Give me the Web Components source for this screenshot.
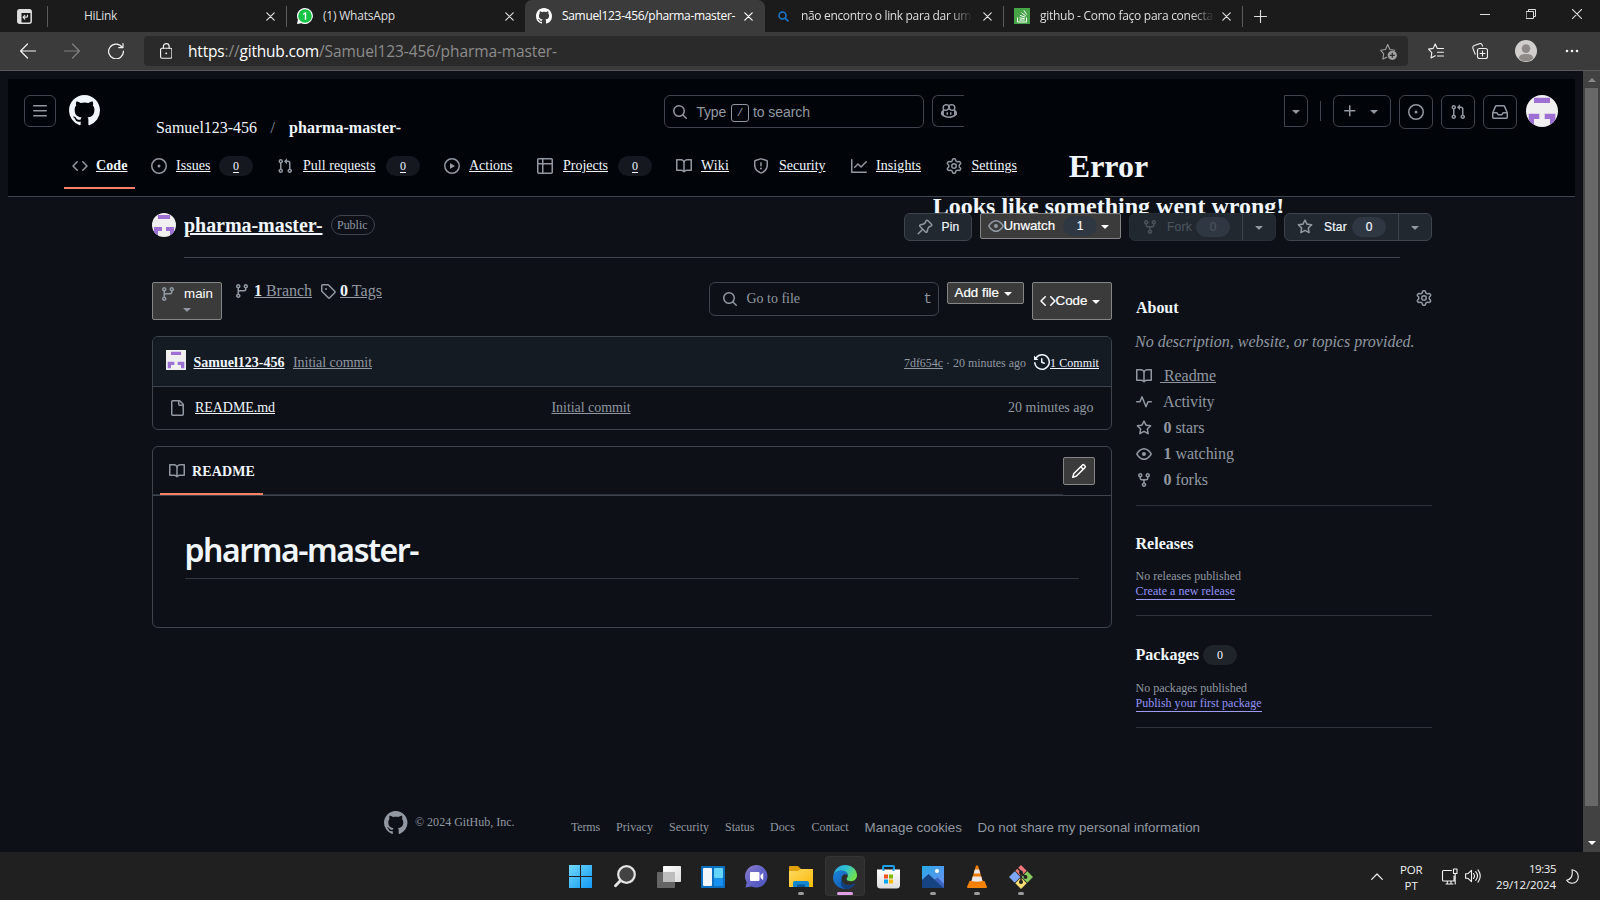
<!DOCTYPE html>
<html lang="pt">
<head>
<meta charset="utf-8">
<title>Samuel123-456/pharma-master-</title>
<style>
html,body{margin:0;padding:0;width:1600px;height:900px;overflow:hidden;background:#0d1117}
body{display:flex;flex-direction:column;font-family:"Liberation Serif",serif;color:#f0f6fc}
.view{display:flex;height:781px}
.page{position:relative;width:1583px;height:781px;background:#0d1117;overflow:hidden}
</style>
</head>
<body>
<browser-tabs></browser-tabs>
<browser-toolbar></browser-toolbar>
<div class="view">
  <main class="page">
    <gh-header></gh-header>
    <gh-error><span slot="title">Error</span><span slot="detail">Looks like something went wrong!</span></gh-error>
    <repo-title></repo-title>
    <repo-body></repo-body>
    <gh-footer></gh-footer>
  </main>
  <scroll-bar></scroll-bar>
</div>
<task-bar></task-bar>
<script>
const P = {
code:'m11.28 3.22 4.25 4.25a.75.75 0 0 1 0 1.06l-4.25 4.25a.749.749 0 0 1-1.275-.326.749.749 0 0 1 .215-.734L13.94 8l-3.72-3.72a.749.749 0 0 1 .326-1.275.749.749 0 0 1 .734.215Zm-6.56 0a.751.751 0 0 1 1.042.018.751.751 0 0 1 .018 1.042L2.06 8l3.72 3.72a.749.749 0 0 1-.326 1.275.749.749 0 0 1-.734-.215L.47 8.53a.75.75 0 0 1 0-1.06Z',
issue:'M8 9.5a1.5 1.5 0 1 0 0-3 1.5 1.5 0 0 0 0 3ZM8 0a8 8 0 1 1 0 16A8 8 0 0 1 8 0ZM1.5 8a6.5 6.5 0 1 0 13 0 6.5 6.5 0 0 0-13 0Z',
pr:'M1.5 3.25a2.25 2.25 0 1 1 3 2.122v5.256a2.251 2.251 0 1 1-1.5 0V5.372A2.25 2.25 0 0 1 1.5 3.25Zm5.677-.177L9.573.677A.25.25 0 0 1 10 .854V2.5h1A2.5 2.5 0 0 1 13.5 5v5.628a2.251 2.251 0 1 1-1.5 0V5a1 1 0 0 0-1-1h-1v1.646a.25.25 0 0 1-.427.177L7.177 3.427a.25.25 0 0 1 0-.354ZM3.75 2.5a.75.75 0 1 0 0 1.5.75.75 0 0 0 0-1.5Zm0 9.5a.75.75 0 1 0 0 1.5.75.75 0 0 0 0-1.5Zm8.25.75a.75.75 0 1 0 1.5 0 .75.75 0 0 0-1.5 0Z',
play:'M8 0a8 8 0 1 1 0 16A8 8 0 0 1 8 0ZM1.5 8a6.5 6.5 0 1 0 13 0 6.5 6.5 0 0 0-13 0Zm4.879-2.773 4.264 2.559a.25.25 0 0 1 0 .428l-4.264 2.559A.25.25 0 0 1 6 10.559V5.442a.25.25 0 0 1 .379-.215Z',
table:'M0 1.75C0 .784.784 0 1.75 0h12.5C15.216 0 16 .784 16 1.75v12.5A1.75 1.75 0 0 1 14.25 16H1.75A1.75 1.75 0 0 1 0 14.25ZM6.5 6.5v8h7.75a.25.25 0 0 0 .25-.25V6.5Zm8-1.5V1.75a.25.25 0 0 0-.25-.25H6.5V5Zm-13 1.5v7.75c0 .138.112.25.25.25H5v-8ZM5 5V1.5H1.75a.25.25 0 0 0-.25.25V5Z',
book:'M0 1.75A.75.75 0 0 1 .75 1h4.253c1.227 0 2.317.59 3 1.501A3.743 3.743 0 0 1 11.006 1h4.245a.75.75 0 0 1 .75.75v10.5a.75.75 0 0 1-.75.75h-4.507a2.25 2.25 0 0 0-1.591.659l-.622.621a.75.75 0 0 1-1.06 0l-.622-.621A2.25 2.25 0 0 0 5.258 13H.75a.75.75 0 0 1-.75-.75Zm7.251 10.324.004-5.073-.002-2.253A2.25 2.25 0 0 0 5.003 2.5H1.5v9h3.757a3.75 3.75 0 0 1 1.994.574ZM8.755 4.75l-.004 7.322a3.752 3.752 0 0 1 1.992-.572H14.5v-9h-3.495a2.25 2.25 0 0 0-2.25 2.25Z',
shield:'M7.467.133a1.748 1.748 0 0 1 1.066 0l5.25 1.68A1.75 1.75 0 0 1 15 3.48V7c0 1.566-.32 3.182-1.303 4.682-.983 1.498-2.585 2.813-5.032 3.855a1.697 1.697 0 0 1-1.33 0c-2.447-1.042-4.049-2.357-5.032-3.855C1.32 10.182 1 8.566 1 7V3.48a1.75 1.75 0 0 1 1.217-1.667Zm.61 1.429a.25.25 0 0 0-.153 0l-5.25 1.68a.25.25 0 0 0-.174.238V7c0 1.358.275 2.666 1.057 3.86.784 1.194 2.121 2.34 4.366 3.297a.196.196 0 0 0 .154 0c2.245-.956 3.582-2.104 4.366-3.298C13.225 9.666 13.5 8.36 13.5 7V3.48a.251.251 0 0 0-.174-.237l-5.25-1.68ZM8.75 4.75v3a.75.75 0 0 1-1.5 0v-3a.75.75 0 0 1 1.5 0ZM9 10.5a1 1 0 1 1-2 0 1 1 0 0 1 2 0Z',
graph:'M1.5 1.75V13.5h13.75a.75.75 0 0 1 0 1.5H.75a.75.75 0 0 1-.75-.75V1.75a.75.75 0 0 1 1.5 0Zm14.28 2.53-5.25 5.25a.75.75 0 0 1-1.06 0L7 7.06 4.28 9.78a.751.751 0 0 1-1.042-.018.751.751 0 0 1-.018-1.042l3.25-3.25a.75.75 0 0 1 1.06 0L10 7.94l4.72-4.72a.751.751 0 0 1 1.042.018.751.751 0 0 1 .018 1.042Z',
gear:'M8 0a8.2 8.2 0 0 1 .701.031C9.444.095 9.99.645 10.16 1.29l.288 1.107c.018.066.079.158.212.224.231.114.454.243.668.386.123.082.233.09.299.071l1.103-.303c.644-.176 1.392.021 1.82.63.27.385.506.792.704 1.218.315.675.111 1.422-.364 1.891l-.814.806c-.049.048-.098.147-.088.294.016.257.016.515 0 .772-.01.147.038.246.088.294l.814.806c.475.469.679 1.216.364 1.891a7.977 7.977 0 0 1-.704 1.217c-.428.61-1.176.807-1.82.63l-1.102-.302c-.067-.019-.177-.011-.3.071a5.909 5.909 0 0 1-.668.386c-.133.066-.194.158-.211.224l-.29 1.106c-.168.646-.715 1.196-1.458 1.26a8.006 8.006 0 0 1-1.402 0c-.743-.064-1.289-.614-1.458-1.26l-.289-1.106c-.018-.066-.079-.158-.212-.224a5.738 5.738 0 0 1-.668-.386c-.123-.082-.233-.09-.299-.071l-1.103.303c-.644.176-1.392-.021-1.82-.63a8.12 8.12 0 0 1-.704-1.218c-.315-.675-.111-1.422.363-1.891l.815-.806c.05-.048.098-.147.088-.294a6.214 6.214 0 0 1 0-.772c.01-.147-.038-.246-.088-.294l-.815-.806C.635 6.045.431 5.298.746 4.623a7.92 7.92 0 0 1 .704-1.217c.428-.61 1.176-.807 1.82-.63l1.102.302c.067.019.177.011.3-.071.214-.143.437-.272.668-.386.133-.066.194-.158.211-.224l.29-1.106C6.009.645 6.556.095 7.299.03 7.53.01 7.764 0 8 0Zm-.571 1.525c-.036.003-.108.036-.137.146l-.289 1.105c-.147.561-.549.967-.998 1.189-.173.086-.34.183-.5.29-.417.278-.97.423-1.529.27l-1.103-.303c-.109-.03-.175.016-.195.045-.22.312-.412.644-.573.99-.014.031-.021.11.059.19l.815.806c.411.406.562.957.53 1.456a4.709 4.709 0 0 0 0 .582c.032.499-.119 1.05-.53 1.456l-.815.806c-.081.08-.073.159-.059.19.162.346.353.677.573.989.02.03.085.076.195.046l1.102-.303c.56-.153 1.113-.008 1.53.27.161.107.328.204.501.29.447.222.85.629.997 1.189l.289 1.105c.029.109.101.143.137.146a6.6 6.6 0 0 0 1.142 0c.036-.003.108-.036.137-.146l.289-1.105c.147-.561.549-.967.998-1.189.173-.086.34-.183.5-.29.417-.278.97-.423 1.529-.27l1.103.303c.109.029.175-.016.195-.045.22-.313.411-.644.573-.99.014-.031.021-.11-.059-.19l-.815-.806c-.411-.406-.562-.957-.53-1.456a4.709 4.709 0 0 0 0-.582c-.032-.499.119-1.05.53-1.456l.815-.806c.081-.08.073-.159.059-.19a6.464 6.464 0 0 0-.573-.989c-.02-.03-.085-.076-.195-.046l-1.102.303c-.56.153-1.113.008-1.53-.27a4.44 4.44 0 0 0-.501-.29c-.447-.222-.85-.629-.997-1.189l-.289-1.105c-.029-.11-.101-.143-.137-.146a6.6 6.6 0 0 0-1.142 0ZM11 8a3 3 0 1 1-6 0 3 3 0 0 1 6 0ZM9.5 8a1.5 1.5 0 1 0-3.001.001A1.5 1.5 0 0 0 9.5 8Z',
search:'M10.68 11.74a6 6 0 0 1-7.922-8.982 6 6 0 0 1 8.982 7.922l3.04 3.04a.749.749 0 0 1-.326 1.275.749.749 0 0 1-.734-.215ZM11.5 7a4.499 4.499 0 1 0-8.997 0A4.499 4.499 0 0 0 11.5 7Z',
bars:'M1 2.75A.75.75 0 0 1 1.75 2h12.5a.75.75 0 0 1 0 1.5H1.75A.75.75 0 0 1 1 2.75Zm0 5A.75.75 0 0 1 1.75 7h12.5a.75.75 0 0 1 0 1.5H1.75A.75.75 0 0 1 1 7.75ZM1.75 12h12.5a.75.75 0 0 1 0 1.5H1.75a.75.75 0 0 1 0-1.5Z',
github:'M8 0c4.42 0 8 3.58 8 8a8.013 8.013 0 0 1-5.45 7.59c-.4.08-.55-.17-.55-.38 0-.27.01-1.13.01-2.2 0-.75-.25-1.23-.54-1.48 1.78-.2 3.65-.88 3.65-3.95 0-.88-.31-1.59-.82-2.15.08-.2.36-1.02-.08-2.12 0 0-.67-.22-2.2.82-.64-.18-1.32-.27-2-.27-.68 0-1.36.09-2 .27-1.53-1.03-2.2-.82-2.2-.82-.44 1.1-.16 1.92-.08 2.12-.51.56-.82 1.28-.82 2.15 0 3.06 1.86 3.75 3.64 3.95-.23.2-.44.55-.51 1.07-.46.21-1.61.55-2.33-.66-.15-.24-.6-.83-1.23-.82-.67.01-.27.38.01.53.34.19.73.9.82 1.13.16.45.68 1.31 2.69.94 0 .67.01 1.3.01 1.49 0 .21-.15.45-.55.38A7.995 7.995 0 0 1 0 8c0-4.42 3.58-8 8-8Z',
down:'m4.427 7.427 3.396 3.396a.25.25 0 0 0 .354 0l3.396-3.396A.25.25 0 0 0 11.396 7H4.604a.25.25 0 0 0-.177.427Z',
plus:'M7.75 2a.75.75 0 0 1 .75.75V7h4.25a.75.75 0 0 1 0 1.5H8.5v4.25a.75.75 0 0 1-1.5 0V8.5H2.75a.75.75 0 0 1 0-1.5H7V2.75A.75.75 0 0 1 7.75 2Z',
inbox:'M2.8 2.06A1.75 1.75 0 0 1 4.41 1h7.18c.7 0 1.333.417 1.61 1.06l2.74 6.395c.04.093.06.194.06.295v4.5A1.75 1.75 0 0 1 14.25 15H1.75A1.75 1.75 0 0 1 0 13.25v-4.5c0-.101.02-.202.06-.295Zm1.61.44a.25.25 0 0 0-.23.152L1.887 8H4.75a.75.75 0 0 1 .6.3L6.625 10h2.75l1.275-1.7a.75.75 0 0 1 .6-.3h2.863L11.82 2.652a.25.25 0 0 0-.23-.152Zm10.09 7h-2.875l-1.275 1.7a.75.75 0 0 1-.6.3h-3.5a.75.75 0 0 1-.6-.3L4.375 9.5H1.5v3.75c0 .138.112.25.25.25h12.5a.25.25 0 0 0 .25-.25Z',
copilot:'M7.998 15.035c-4.562 0-7.873-2.914-7.998-3.749V9.338c.085-.628.677-1.686 1.588-2.065.013-.07.024-.143.036-.218.029-.183.06-.384.126-.612-.201-.508-.254-1.084-.254-1.656 0-.87.128-1.769.693-2.484.579-.733 1.494-1.124 2.724-1.261 1.206-.134 2.262.034 2.944.765.05.053.096.108.139.165.044-.057.094-.112.143-.165.682-.731 1.738-.899 2.944-.765 1.23.137 2.145.528 2.724 1.261.566.715.693 1.614.693 2.484 0 .572-.053 1.148-.254 1.656.066.228.098.429.126.612.012.076.024.148.037.218.924.385 1.522 1.471 1.591 2.095v1.872c0 .766-3.351 3.795-8.002 3.795Zm0-1.485c2.28 0 4.584-1.11 5.002-1.433V7.862l-.023-.116c-.49.21-1.075.291-1.727.291-1.146 0-2.059-.327-2.71-.991A3.222 3.222 0 0 1 8 6.303a3.24 3.24 0 0 1-.544.743c-.65.664-1.563.991-2.71.991-.652 0-1.236-.081-1.727-.291l-.023.116v4.255c.419.323 2.722 1.433 5.002 1.433ZM6.762 2.83c-.193-.206-.637-.413-1.682-.297-1.019.113-1.479.404-1.713.7-.247.312-.369.789-.369 1.554 0 .793.129 1.171.308 1.371.162.181.519.379 1.442.379.853 0 1.339-.235 1.638-.54.315-.322.527-.827.617-1.553.117-.935-.037-1.395-.241-1.614Zm4.155-.297c-1.044-.116-1.488.091-1.681.297-.204.219-.359.679-.242 1.614.091.726.303 1.231.618 1.553.299.305.784.54 1.638.54.922 0 1.28-.198 1.442-.379.179-.2.308-.578.308-1.371 0-.765-.123-1.242-.37-1.554-.233-.296-.693-.587-1.713-.7ZM6.25 9.037a.75.75 0 0 1 .75.75v1.501a.75.75 0 0 1-1.5 0V9.787a.75.75 0 0 1 .75-.75Zm4.25.75v1.501a.75.75 0 0 1-1.5 0V9.787a.75.75 0 0 1 1.5 0Z',
pin:'m11.294.984 3.722 3.722a1.75 1.75 0 0 1-.504 2.826l-1.327.613a3.089 3.089 0 0 0-1.707 2.084l-.584 2.454c-.317 1.332-1.972 1.8-2.94.832L5.75 11.311 1.78 15.28a.749.749 0 1 1-1.06-1.06l3.969-3.97-2.204-2.204c-.968-.968-.5-2.623.832-2.94l2.454-.584a3.08 3.08 0 0 0 2.084-1.707l.613-1.327a1.75 1.75 0 0 1 2.826-.504ZM6.283 9.723l2.732 2.731a.25.25 0 0 0 .42-.119l.584-2.454a4.586 4.586 0 0 1 2.537-3.098l1.328-.613a.25.25 0 0 0 .072-.404l-3.722-3.722a.25.25 0 0 0-.404.072l-.613 1.328a4.584 4.584 0 0 1-3.098 2.537l-2.454.584a.25.25 0 0 0-.119.42l2.731 2.732Z',
eye:'M8 2c1.981 0 3.671.992 4.933 2.078 1.27 1.091 2.187 2.345 2.637 3.023a1.62 1.62 0 0 1 0 1.798c-.45.678-1.367 1.932-2.637 3.023C11.67 13.008 9.981 14 8 14c-1.981 0-3.671-.992-4.933-2.078C1.797 10.83.88 9.576.43 8.898a1.62 1.62 0 0 1 0-1.798c.45-.677 1.367-1.931 2.637-3.022C4.33 2.992 6.019 2 8 2ZM1.679 7.932a.12.12 0 0 0 0 .136c.411.622 1.241 1.75 2.366 2.717C5.176 11.758 6.527 12.5 8 12.5c1.473 0 2.825-.742 3.955-1.715 1.124-.967 1.954-2.096 2.366-2.717a.12.12 0 0 0 0-.136c-.412-.621-1.242-1.75-2.366-2.717C10.824 4.242 9.473 3.5 8 3.5c-1.473 0-2.825.742-3.955 1.715-1.124.967-1.954 2.096-2.366 2.717ZM8 10a2 2 0 1 1-.001-3.999A2 2 0 0 1 8 10Z',
fork:'M5 5.372v.878c0 .414.336.75.75.75h4.5a.75.75 0 0 0 .75-.75v-.878a2.25 2.25 0 1 1 1.5 0v.878a2.25 2.25 0 0 1-2.25 2.25h-1.5v2.128a2.251 2.251 0 1 1-1.5 0V8.5h-1.5A2.25 2.25 0 0 1 3.5 6.25v-.878a2.25 2.25 0 1 1 1.5 0ZM5 3.25a.75.75 0 1 0-1.5 0 .75.75 0 0 0 1.5 0Zm6.75.75a.75.75 0 1 0 0-1.5.75.75 0 0 0 0 1.5Zm-3 8.75a.75.75 0 1 0-1.5 0 .75.75 0 0 0 1.5 0Z',
star:'M8 .25a.75.75 0 0 1 .673.418l1.882 3.815 4.21.612a.75.75 0 0 1 .416 1.279l-3.046 2.97.719 4.192a.751.751 0 0 1-1.088.791L8 12.347l-3.766 1.98a.75.75 0 0 1-1.088-.79l.72-4.194L.818 6.374a.75.75 0 0 1 .416-1.28l4.21-.611L7.327.668A.75.75 0 0 1 8 .25Zm0 2.445L6.615 5.5a.75.75 0 0 1-.564.41l-3.097.45 2.24 2.184a.75.75 0 0 1 .216.664l-.528 3.084 2.769-1.456a.75.75 0 0 1 .698 0l2.77 1.456-.53-3.084a.75.75 0 0 1 .216-.664l2.24-2.183-3.096-.45a.75.75 0 0 1-.564-.41L8 2.694Z',
branch:'M9.5 3.25a2.25 2.25 0 1 1 3 2.122V6A2.5 2.5 0 0 1 10 8.5H6a1 1 0 0 0-1 1v1.128a2.251 2.251 0 1 1-1.5 0V5.372a2.25 2.25 0 1 1 1.5 0v1.836A2.493 2.493 0 0 1 6 7h4a1 1 0 0 0 1-1v-.628A2.25 2.25 0 0 1 9.5 3.25Zm-6 0a.75.75 0 1 0 1.5 0 .75.75 0 0 0-1.5 0Zm8.25-.75a.75.75 0 1 0 0 1.5.75.75 0 0 0 0-1.5ZM4.25 12a.75.75 0 1 0 0 1.5.75.75 0 0 0 0-1.5Z',
tag:'M1 7.775V2.75C1 1.784 1.784 1 2.75 1h5.025c.464 0 .91.184 1.238.513l6.25 6.25a1.75 1.75 0 0 1 0 2.474l-5.026 5.026a1.75 1.75 0 0 1-2.474 0l-6.25-6.25A1.752 1.752 0 0 1 1 7.775Zm1.5 0c0 .066.026.13.073.177l6.25 6.25a.25.25 0 0 0 .354 0l5.025-5.025a.25.25 0 0 0 0-.354l-6.25-6.25a.25.25 0 0 0-.177-.073H2.75a.25.25 0 0 0-.25.25ZM6 5a1 1 0 1 1 0 2 1 1 0 0 1 0-2Z',
file:'M2 1.75C2 .784 2.784 0 3.75 0h6.586c.464 0 .909.184 1.237.513l2.914 2.914c.329.328.513.773.513 1.237v9.586A1.75 1.75 0 0 1 13.25 16h-9.5A1.75 1.75 0 0 1 2 14.25Zm1.75-.25a.25.25 0 0 0-.25.25v12.5c0 .138.112.25.25.25h9.5a.25.25 0 0 0 .25-.25V6h-2.75A1.75 1.75 0 0 1 9 4.25V1.5Zm6.75.062V4.25c0 .138.112.25.25.25h2.688l-.011-.013-2.914-2.914-.013-.011Z',
history:'m.427 1.927 1.215 1.215a8.002 8.002 0 1 1-1.6 5.685.75.75 0 1 1 1.493-.154 6.5 6.5 0 1 0 1.18-4.458l1.358 1.358A.25.25 0 0 1 3.896 6H.25A.25.25 0 0 1 0 5.75V2.104a.25.25 0 0 1 .427-.177ZM7.75 4a.75.75 0 0 1 .75.75v2.992l2.028.812a.75.75 0 0 1-.557 1.392l-2.5-1A.751.751 0 0 1 7 8.25v-3.5A.75.75 0 0 1 7.75 4Z',
pencil:'M11.013 1.427a1.75 1.75 0 0 1 2.474 0l1.086 1.086a1.75 1.75 0 0 1 0 2.474l-8.61 8.61c-.21.21-.47.364-.756.445l-3.251.93a.75.75 0 0 1-.927-.928l.929-3.25c.081-.286.235-.547.445-.758l8.61-8.61Zm.176 4.823L9.75 4.81l-6.286 6.287a.253.253 0 0 0-.064.108l-.558 1.953 1.953-.558a.253.253 0 0 0 .108-.064Zm1.238-3.763a.25.25 0 0 0-.354 0L10.811 3.75l1.439 1.44 1.263-1.263a.25.25 0 0 0 0-.354Z',
pulse:'M6 2c.306 0 .582.187.696.471L10 10.731l1.304-3.26A.751.751 0 0 1 12 7h3.25a.75.75 0 0 1 0 1.5h-2.742l-1.812 4.528a.751.751 0 0 1-1.392 0L6 4.77 4.696 8.03A.75.75 0 0 1 4 8.5H.75a.75.75 0 0 1 0-1.5h2.742l1.812-4.529A.751.751 0 0 1 6 2Z'
};
/* Multi-part artwork: [viewBox, markup] */
const stroke = (d, w = 1) => `<g fill="none" stroke="currentColor" stroke-width="${w}" stroke-linecap="round" stroke-linejoin="round">${d}</g>`;
const A = {
x:['0 0 9 9', stroke('<path d="M.8.8l7.4 7.4M8.2.8L.8 8.2"/>',1.2)],
xw:['0 0 10 10', stroke('<path d="M.3.3l9.4 9.4M9.7.3L.3 9.7"/>',1.1)],
min:['0 0 10 10', '<path d="M0 5h10v1H0z" fill="currentColor"/>'],
restore:['0 0 10 10', stroke('<path d="M.5 2.5h7v7h-7zM2.5 2.5v-2h7v7h-2"/>')],
newtab:['0 0 14 14', stroke('<path d="M7 .5v13M.5 7h13"/>',1.2)],
tabact:['0 0 15 15', stroke('<rect x=".8" y=".8" width="13.4" height="13.4" rx="2" stroke-width="1.5"/><path d="M10.5 6v1.2q0 1-1 1H6.2M7.8 6.4L6 8.2l1.8 1.8"/>',1.2)+'<path d="M1 1h13v3H4.5v10H1z" fill="currentColor"/>'],
back:['0 0 16 16', stroke('<path d="M15.5 8H.8M7.5 1L.6 8l6.9 7"/>',1.2)],
fwd:['0 0 16 16', stroke('<path d="M.5 8h14.7M8.5 1l6.9 7-6.9 7"/>',1.2)],
reload:['0 0 16 16', stroke('<path d="M14.2 4.4A7.4 7.4 0 1 0 15.4 8M15 .6v4h-4.3"/>',1.2)],
lock:['0 0 13 17', stroke('<rect x=".6" y="5.6" width="11.8" height="10.6" rx="1.5"/><path d="M3.5 5.4V3.6a3 3 0 0 1 6 0v1.8"/>',1.2)+'<circle cx="6.5" cy="11" r="1" fill="currentColor"/>'],
staradd:['0 0 17 17', stroke('<path d="M6.8 14.2l-3.9 1.9.8-5.2L.6 7.2l4.9-.7L7.7 1.6l2.2 4.9 4.9.7"/>',1.1)+'<circle cx="12.3" cy="12.3" r="4.6" fill="currentColor"/><path d="M12.3 9.8v5M9.8 12.3h5" stroke="#2b2b2b" stroke-width="1.2"/>'],
fav:['0 0 16 16', stroke('<path d="M9.2 5.2L7.2.9 5.2 5.4.5 6.1l3.3 3.5L3 15l4.2-2.3M9.5 5.5h6M9.5 9.3h6M9.5 13h6"/>',1.1)],
coll:['0 0 16 16', stroke('<rect x="5.5" y="5.5" width="10" height="10" rx="2"/><path d="M3.2 11.2L1 5.6q-.8-2.2 1.3-3l5-1.9q2-.7 2.8 1.2l.5 1.2M10.5 8v5M8 10.5h5"/>',1.1)],
user:['0 0 22 22','<circle cx="11" cy="11" r="11" fill="#d0cfcd"/><circle cx="11" cy="8.6" r="4.3" fill="#8d8a87"/><path d="M3.8 18.4q0-4.4 7.2-4.4t7.2 4.4A10.500 10.500 0 0 1 3.800 18.400Z" fill="#8d8a87"/>'],
dots:['0 0 14 4','<circle cx="2" cy="2" r="1.3" fill="currentColor"/><circle cx="7" cy="2" r="1.3" fill="currentColor"/><circle cx="12" cy="2" r="1.3" fill="currentColor"/>'],
wa:['0 0 16 16','<path d="M8 0a8 8 0 1 1-3.600 15.200L0 16l.9-4.300A8 8 0 0 1 8 0Z" fill="#fff"/><circle cx="8" cy="8" r="6.8" fill="#16c345"/><path d="M6.200 5.600 8.300 4.200h.9v7.600H7.800V6l-1.600.9z" fill="#fff"/>'],
so:['0 0 16 16','<rect width="16" height="16" fill="#46a546"/><path d="M3.500 9.500v4.500h9V9.500M5.300 12h5.400M5.400 9.800l5.300.9M6 7.300l5.100 1.900M7.500 4.700l4.300 3.300M9.800 2.300l3 4.300" fill="none" stroke="#fff" stroke-width="1"/>'],
bsearch:['0 0 11 11','<circle cx="4.500" cy="4.500" r="3.500" fill="none" stroke="#1a79cf" stroke-width="1.500"/><path d="M7 7l3.400 3.400" stroke="#1a79cf" stroke-width="1.700"/>'],
ident:['0 0 12 12','<path d="M0 0h12v12H0z" fill="#f0f0f0"/><path d="M3 1h6v2H3zM1 7h4v2H3v2H1zM7 7h4v4H9V9H7z" fill="#9f70d3"/>'],
win:['0 0 23 23','<defs><linearGradient id="g" x2="1" y2="1"><stop stop-color="#6fd8fb"/><stop offset="1" stop-color="#1399f5"/></linearGradient></defs><path d="M0 0h11v11H0zM12 0h11v11H12zM0 12h11v11H0zM12 12h11v11H12z" fill="url(#g)"/>'],
tsearch:['0 0 22 23','<circle cx="12.500" cy="9.500" r="8.300" fill="#434343" stroke="#e4e4e4" stroke-width="2.200"/><path d="M6.300 15.700L1.500 20.800" stroke="#e4e4e4" stroke-width="2.800" stroke-linecap="round"/>'],
tview:['0 0 24 22','<defs><linearGradient id="g" x2="1" y2="1"><stop stop-color="#fff"/><stop offset="1" stop-color="#dcdcdc"/></linearGradient></defs><rect x="6" y="0" width="18" height="16" rx=".8" fill="url(#g)"/><rect y="6" width="18" height="16" rx=".8" fill="#656565"/><path d="M6 6h12v10H6z" fill="#bdbdbd"/>'],
widg:['0 0 24 22','<rect width="24" height="22" rx="1" fill="#0b6fc4"/><rect x="2" y="2" width="9" height="18" rx="1" fill="#f3f6f9"/><rect x="13" y="2" width="9" height="10" rx="1" fill="#66d4fb"/><rect x="13" y="12" width="9" height="8" rx="1" fill="#1790ee"/>'],
chat:['0 0 23 23','<defs><linearGradient id="g" x1="0" y1="0" x2="1" y2="1"><stop stop-color="#8e7cc8"/><stop offset=".5" stop-color="#6264c8"/><stop offset="1" stop-color="#4b53bc"/></linearGradient></defs><path d="M11.500 0a11.300 11.300 0 1 1-5 21.600L.5 22.500l1.200-5.300A11.300 11.300 0 0 1 11.500 0Z" fill="url(#g)"/><rect x="5" y="7" width="9.500" height="9" rx="1" fill="#fff"/><path d="M15.500 10.300l2.700-2.600v7.600l-2.700-2.600z" fill="#fff"/>'],
folder:['0 0 24 22','<defs><linearGradient id="g" x2="1" y2="1"><stop stop-color="#ffda64"/><stop offset="1" stop-color="#fab908"/></linearGradient></defs><path d="M0 1q0-1 1-1h8l3 3h10q1 0 1 1v6H0z" fill="#e0a00a"/><path d="M0 5h9l2.500-2H24v18H0z" fill="url(#g)"/><path d="M4 21v-4q0-2 2-2h12q2 0 2 2v4z" fill="#1387cf"/><path d="M8 21v-2.500h8V21z" fill="#0b5a9c"/>'],
edge:['0 0 24 24','<defs><linearGradient id="g" x2="1" y2=".5"><stop stop-color="#2c9fe0"/><stop offset=".5" stop-color="#2fc1d6"/><stop offset="1" stop-color="#6fe04f"/></linearGradient><linearGradient id="h" x2="1" y2="1"><stop stop-color="#1b84dc"/><stop offset="1" stop-color="#0f4fa8"/></linearGradient></defs><path d="M.4 10.500C1.200 4.400 6 0 12 0c6.900 0 12 4.800 12 10.300 0 3.900-3 6-6 6-3.100 0-4.500-1.300-4.500-2.300 0-.8 1.300-1.200 1.300-3.500 0-2.600-2.600-4.800-6-4.800-4 0-7.300 2-8.400 4.800Z" fill="url(#g)"/><path d="M.1 12.500C.1 8.400 4 5.700 8.800 5.700c3.400 0 6 2.200 6 4.600-1-.9-2-1.200-3-1-2.500.5-3.600 3-3.300 5.400.6 4.300 5.500 6.600 9.500 5.500 1.300-.4 2.600-1 3.400-1.500.5-.3.800.1.500.5A12 12 0 0 1 12 24C5.300 24 .1 18.800.1 12.500Z" fill="url(#h)"/><path d="M8.400 15.200c.8 4.300 5.600 6.100 9.600 5 1.300-.4 2.600-1 3.400-1.500.5-.3.800.1.500.5-2.300 3.100-5.400 4.700-8.400 4.700-4.500-.2-6.800-5-5.100-8.700Z" fill="#123e7c"/>'],
store:['0 0 23 24','<defs><linearGradient id="g" x2="0" y2="1"><stop stop-color="#fff"/><stop offset="1" stop-color="#dcdcdc"/></linearGradient></defs><path d="M6 6V1.700Q6 1 6.700 1h9.600q.7 0 .7.700V6" fill="none" stroke="#1ba0ea" stroke-width="2"/><path d="M0 4.500h23V20q0 3.500-3.500 3.500h-16Q0 23.500 0 20z" fill="url(#g)"/><path d="M5.500 3.500h2V6h-2zM15.500 3.500h2V6h-2z" fill="#1ba0ea"/><path d="M7 9.500h4v4H7z" fill="#f25022"/><path d="M12 9.500h4v4h-4z" fill="#7fba00"/><path d="M7 14.500h4v4H7z" fill="#00a4ef"/><path d="M12 14.500h4v4h-4z" fill="#ffb900"/>'],
photo:['0 0 22 22','<defs><linearGradient id="g" x2="1" y2="1"><stop stop-color="#27a9e8"/><stop offset="1" stop-color="#6f8ff0"/></linearGradient></defs><rect width="22" height="22" fill="url(#g)"/><circle cx="15" cy="5" r="2" fill="#fff"/><path d="M11 15l4.500-3.700L22 18v4h-8z" fill="#3c63bd"/><path d="M0 14l6.500-6 15 14H0z" fill="#164382"/>'],
vlc:['0 0 20 23','<path d="M2.500 16h15l2.500 6q0 1-1 1H1q-1 0-1-1z" fill="#f58300"/><path d="M9 .5h2l5.200 17.500q-6.200 2.600-12.400 0z" fill="#f07c05"/><path d="M7.900 4.500h4.200l1.200 4H6.700zM5.700 11.500h8.600l1.200 4.500q-5.500 1.500-11 0z" fill="#e8e8e8"/>'],
git:['0 0 24 24','<path d="M12 0l5.700 5.700-5.700 5.700-5.700-5.700z" fill="#f07878"/><path d="M12 12.600l5.700 5.700L12 24l-5.700-5.700z" fill="#f8dc74"/><path d="M0 12l5.700-5.700 5.700 5.700-5.700 5.700z" fill="#7da8f5"/><path d="M12.600 12l5.700-5.700L24 12l-5.700 5.700z" fill="#86cc5c"/><g stroke="#222" stroke-width="1.500" fill="#222"><path d="M8 2.500l4 4v11M12 7.500l4.500 4.500" fill="none"/><circle cx="12" cy="7.500" r="1.200"/><circle cx="12" cy="17" r="1.300"/><circle cx="16.500" cy="12" r="1.200"/></g>'],
up:['0 0 12 7', stroke('<path d="M.7 6.300L6 1l5.300 5.300"/>',1.2)],
net:['0 0 17 17', stroke('<path d="M10.500 2.500h-8q-1 0-1 1v8.500q0 1 1 1H13V8M5 16h7M6.300 13.200V16M10 13.200V16M12.500 1h3.500v4.500h-3.500zM14.200 5.500V16"/>',1.1)],
vol:['0 0 16 14', stroke('<path d="M.6 4.700H3L6.500 1.300v11.400L3 9.300H.6zM8.500 4.500q2 2.500 0 5M10.700 2.700q3.600 4.300 0 8.600M13 .9q4.500 6.100 0 12.200"/>',1.1)],
moon:['0 0 13 15', stroke('<path d="M6 .8Q12.300 2 12.300 8q-.5 6-6.300 6.200Q2.300 14 .7 11.200 7.500 10 6 .8Z"/>',1.1)]
};
const BASE = `*{box-sizing:border-box}.r{display:flex;align-items:flex-start}.c{display:flex;align-items:center}fit-text,x-icon,gh-counter{flex:none}`;
const define = (tag, css, html, after) => customElements.define(tag, class extends HTMLElement {
  connectedCallback() {
    if (this.shadowRoot) return;
    const t = document.createElement('template');
    t.innerHTML = `<style>${BASE}${css}</style>${typeof html === 'function' ? html(this) : html}`;
    this.attachShadow({mode:'open'}).appendChild(t.content.cloneNode(true));
    if (after) after(this);
  }
});
define('x-icon', `:host{display:block;line-height:0}svg{display:block}`, el => {
  const n = el.getAttribute('name'), w = el.getAttribute('w') || 16, h = el.getAttribute('h') || w;
  const [vb, body] = A[n] || ['0 0 16 16', `<path fill="currentColor" fill-rule="evenodd" d="${P[n]}"/>`];
  return `<svg width="${w}" height="${h}" viewBox="${vb}" preserveAspectRatio="none">${body}</svg>`;
});
/* Text run that tracks its letters so that it fills the given width */
define('fit-text', `:host{display:block;white-space:nowrap}span{display:inline-block}`, '<span><slot></slot></span>', el => {
  const w = +el.getAttribute('w'), s = el.shadowRoot.querySelector('span');
  el.style.width = w + 'px';
  el.style.letterSpacing = ((w - s.getBoundingClientRect().width) / el.textContent.length).toFixed(4) + 'px';
  if (el.hasAttribute('u')) s.style.textDecoration = 'underline';
});
define('gh-counter', `:host{display:flex;align-items:center;justify-content:center;width:34px;height:20px;border-radius:10px;font-size:12px;background:#15191f}`, '<slot></slot>');
const T = (x, w, t, a = '') => `<fit-text w="${w}" style="margin-left:${x}px;${a}">${t}</fit-text>`;
const U = (x, w, t, a = '') => `<fit-text u w="${w}" style="margin-left:${x}px;${a}">${t}</fit-text>`;
const I = (x, n, w = 16, h = w, a = '') => `<x-icon name="${n}" w="${w}" h="${h}" style="margin-left:${x}px;${a}"></x-icon>`;
const S = x => `<i style="margin-left:${x}px"></i>`;

define('browser-tabs', `:host{display:flex;height:32px;align-items:center;background:#1b1b1b;color:#dedede;font:12px/16px "Open Sans",sans-serif}
i{width:1px;height:21px;background:#5b5b5b;flex:none}
.on{width:240px;height:32px;margin-left:11px;background:#3b3b3b;border-radius:7px 7px 0 0;color:#fff;flex:none}
.fade{-webkit-mask-image:linear-gradient(90deg,#000 88%,transparent 101%)}`,
`${I(17,'tabact',15,15)}${S(15)}${T(36,33,'HiLink')}${I(149,'x',9)}${S(11)}
${I(10,'wa')}${T(10,72,'(1) WhatsApp')}${I(110,'x',9)}
<div class="on c">${I(11,'github')}${T(10,173,'Samuel123-456/pharma-master-')}${I(9,'x',9)}</div>
${I(13,'bsearch',11)}<div class="fade">${T(12,170,'não encontro o link para dar um')}</div>${I(12,'x',9)}${S(11)}
${I(10,'so')}<div class="fade">${T(10,173,'github - Como faço para conecta')}</div>${I(9,'x',9)}${S(11)}
${I(11,'newtab',13)}${I(213,'min',10,10,'margin-top:-4px')}${I(36,'restore',10,10,'margin-top:-4px')}${I(36,'xw',10,10,'margin-top:-4px')}`);

define('browser-toolbar', `:host{display:flex;height:38px;align-items:center;background:#3b3b3b;border-bottom:1px solid #5a5a5a;color:#f2f2f2;font:15.5px/20px "Open Sans",sans-serif}
.bar{width:1264px;height:30px;margin-left:20px;border-radius:4px;background:#2a2a2a;flex:none}`,
`${I(20,'back')}${I(28,'fwd',16,16,'color:#808080')}${I(28,'reload')}
<div class="bar c">${I(15.5,'lock',12.5,16)}${T(16,36.5,'https','color:#fff')}${T(0,15,'://','color:#8c8c8c')}${T(0,79.5,'github.com','color:#fff')}${T(0,238,'/Samuel123-456/pharma-master-','color:#8c8c8c')}${I(822.5,'staradd',17,17,'color:#a0a0a0')}</div>
${I(20,'fav')}${I(28,'coll')}${I(27,'user',22)}${I(28,'dots',14,4)}`);

define('gh-header', `:host{display:block;box-sizing:border-box;margin:8px 8px 0;width:1567px;height:118px;background:#010409;border-bottom:1px solid #3d444d;font:16px/18px "Liberation Serif",serif;color:#f0f6fc}
.top{height:64px;padding:16px 0 0 16px}
.b{height:32px;border:1px solid #3d444d;border-radius:6px;color:#9198a1;justify-content:center;flex:none}
.sq{width:34px;height:34px;margin-left:8px}
.s{width:260px;height:33px;margin-left:263px;justify-content:flex-start;font:14px/20px "Liberation Sans",sans-serif}
.k{width:18px;height:18px;margin:3px 0 0 5px;border:1px solid #9198a1;border-radius:3px;font:11px/17px "Liberation Mono",monospace;text-align:center}
.d{width:1px;height:20px;margin:6px 0 0 12px;background:#3d444d}
nav{height:46px;padding-left:56px;font-size:14px;line-height:18px}
nav x-icon{color:#9198a1}nav gh-counter{text-decoration:underline;text-underline-offset:2px}
.cur{width:71px;height:46px;padding-left:8px;box-shadow:inset 0 -2px #f78166;font-weight:700;flex:none}`,
`<div class="top r"><div class="b c" style="width:32px">${I(0,'bars')}</div>${I(13,'github',31)}
${T(56,101,'Samuel123-456','margin-top:24px')}${T(13.5,6,'/','margin-top:24px;color:#9198a1')}${T(12.5,112,'pharma-master-','margin-top:24px;font-weight:700')}
<div class="b s c">${I(7,'search')}${T(8.500,29.500,'Type')}<div class="k">/</div>${T(4,57,'to search')}</div>
<div class="b c" style="width:32px;margin-left:8px;border-right:0;border-radius:6px 0 0 6px">${I(1,'copilot')}</div>
<div class="b c" style="width:24px;margin-left:320px;border-radius:0 6px 6px 0">${I(0,'down')}</div><div class="d"></div>
<div class="b c" style="width:58px;margin-left:12px">${I(0,'plus')}${I(8,'down')}</div>
<div class="b sq c">${I(0,'issue')}</div><div class="b sq c">${I(0,'pr')}</div><div class="b sq c">${I(0,'inbox')}</div>
${I(9,'ident',32,32,'border-radius:50%;overflow:hidden')}</div>
<nav class="c"><div class="cur c">${I(0,'code')}${U(8,31.5,'Code')}</div>
${I(16,'issue')}${U(9,34.500,'Issues')}<gh-counter style="margin-left:8.5px">0</gh-counter>
${I(24,'pr')}${U(10,72.500,'Pull requests')}<gh-counter style="margin-left:10.5px">0</gh-counter>
${I(24,'play')}${U(9,43.500,'Actions')}${I(24.500,'table')}${U(10,45,'Projects')}<gh-counter style="margin-left:10px">0</gh-counter>
${I(24,'book')}${U(9,28,'Wiki')}${I(24,'shield')}${U(10,46.500,'Security')}${I(25.500,'graph')}${U(9,45,'Insights')}${I(25,'gear')}${U(9.500,45.500,'Settings')}</nav>`);

/* Overlay that spills out of the header and slides under the repository actions */
define('gh-error', `:host{position:absolute;left:932.5px;top:71px;width:352px;height:71px;overflow:hidden;text-align:center;color:#f0f6fc;font-family:"Liberation Serif",serif;font-weight:700}
.a{font-size:32px;line-height:40px;margin-top:4px}.b{font-size:24px;line-height:28px;margin-top:6px;white-space:nowrap}`,
`<div class="a"><slot name="title"></slot></div><div class="b"><slot name="detail"></slot></div>`);

define('gh-button', `:host{display:flex;box-sizing:border-box;position:relative;flex:none;align-items:center;height:28px;background:#212830;border:1px solid #3d444d;border-radius:6px;color:#f0f6fc;font:13.333px/16px "Liberation Sans",sans-serif;-webkit-text-stroke:.2px}
:host([native]){background:#3b3b3b;border-color:#858585;border-radius:2px;color:#fff}:host([off]){color:#4b535d;border-color:#272e36}`, '<slot></slot>');

define('repo-title', `:host{display:block;height:61px;padding-top:16px;box-sizing:border-box;font-family:"Liberation Serif",serif}
.r{height:44px;padding-left:152px}
.p{width:44px;height:20px;margin:2px 0 0 8px;border:1px solid #3d444d;border-radius:10px;color:#9198a1;font-size:12px;line-height:18px;padding-left:6px;flex:none}
hr{margin:0 0 0 184px;width:1216px;height:1px;border:0;background:#3d444d}
gh-button gh-counter{background:#2f3742;font-size:12px}.v{align-self:stretch;width:1px;background:#3d444d;flex:none}`,
`<div class="r">${I(0,'ident',24,24,'border-radius:50%;overflow:hidden')}${U(8,138.5,'pharma-master-','font:700 20px/24px Liberation Serif,serif')}
<div class="p">${T(-.5,30.500,'Public')}</div>
<gh-button style="width:68px;margin-left:529.5px">${I(12,'pin',16,16,'color:#9198a1')}${T(8.500,18,'Pin','font-size:12px')}</gh-button>
<gh-button native style="width:141px;height:26px;margin-left:8px">${I(7,'eye',16,16,'color:#9198a1')}${T(-.5,51.500,'Unwatch')}<gh-counter style="margin-left:8px">1</gh-counter>${I(0,'down')}</gh-button>
<gh-button off style="width:147px;margin-left:8px">${I(12,'fork')}${T(9,25,'Fork','font-size:12px')}<gh-counter style="margin-left:4px">0</gh-counter><div class="v" style="margin-left:12px"></div>${I(8,'down',16,16,'color:#9198a1')}</gh-button>
<gh-button style="width:148px;margin-left:8px">${I(12,'star',16,16,'color:#9198a1')}${T(11,23,'Star','font-size:12px')}<gh-counter style="margin-left:5px">0</gh-counter><div class="v" style="margin-left:12px"></div>${I(8,'down',16,16,'color:#9198a1')}</gh-button>
</div><hr>`);

define('repo-files', `:host{display:block;width:960px;font:14px/18px "Liberation Serif",serif;color:#9198a1}
.bar{height:38px}.find{width:230px;height:34px;margin-left:326.5px;border:1px solid #3d444d;border-radius:6px;flex:none}
.main{flex-direction:column;align-items:flex-start;width:70px;height:38px}
.box{border:1px solid #3d444d;border-radius:6px;margin-top:16px;overflow:hidden}
.h{height:50px;background:#151b23;border-bottom:1px solid #3d444d}b{color:#f0f6fc}
.tabs{width:910px;height:48px;border-bottom:1px solid #2b323a;padding-left:7px;flex:none}
.tab{width:103px;height:48px;padding:1px 0 2px 9px;box-shadow:inset 0 -2px #f78166;font-weight:700;color:#f0f6fc}
h1{margin:34px 32px 0;height:49px;border-bottom:1px solid #30373f;font:600 32px/40px "Noto Sans","Open Sans",sans-serif;color:#f0f6fc}`,
`<div class="bar r"><gh-button native class="main"><div class="c" style="height:16px;margin-top:3px">${I(7,'branch',16,16,'color:#9198a1')}${T(8,29,'main','-webkit-text-stroke:0;margin-top:-1px')}</div>${I(26,'down',16,16,'color:#9198a1;margin-top:-1px')}</gh-button>
${I(12,'branch',16,16,'margin-top:1px')}${U(4,58,'<b>1</b> Branch','font-size:16px;line-height:20px;margin-top:-1px')}
${I(8,'tag',16,16,'margin-top:1px')}${U(4,42,'<b>0</b> Tags','font-size:16px;line-height:20px;margin-top:-1px')}
<div class="find c">${I(12,'search')}${T(9,53.500,'Go to file')}${T(123.500,8.400,'t','font:14px/18px Liberation Mono,monospace')}</div>
<gh-button native style="width:77px;height:22px;margin-left:8px">${T(7,44.500,'Add file')}${I(0.500,'down')}</gh-button>
<gh-button native style="width:80px;height:38px;margin-left:8px">${I(7,'code')}${T(0,32,'Code')}${I(0,'down')}</gh-button></div>
<div class="box" style="height:94px"><div class="h c">${I(13,'ident',20,20,'margin-bottom:3px')}${U(7.500,91,'Samuel123-456','font-weight:700;color:#f0f6fc;margin-top:3px')}${U(8.500,79,'Initial commit','margin-top:3px')}
${U(532,39,'7df654c','font-size:12px;margin-top:2px')}${T(3,80,'· 20 minutes ago','font-size:12px;margin-top:2px')}${I(8,'history',16,16,'color:#f0f6fc;margin-top:1px')}${U(0,49,'1 Commit','font-size:12px;color:#f0f6fc;margin-top:3px')}</div>
<div class="c" style="height:42px">${I(16,'file')}${U(10,80,'README.md','color:#f0f6fc')}${U(276.5,79,'Initial commit')}${T(377.5,85.500,'20 minutes ago')}</div></div>
<div class="box" style="height:182px"><div class="r" style="height:49px;border-bottom:1px solid #3d444d"><div class="tabs"><div class="tab c">${I(0,'book',16,16,'color:#9198a1')}${T(7,63,'README','margin-top:2px')}</div></div>
<gh-button native style="width:32px;height:28px;margin-top:10px">${I(7,'pencil')}</gh-button></div><h1>${T(-.5,233.5,'pharma-master-')}</h1></div>`);

define('repo-sidebar', `:host{display:block;width:296px;margin-left:24px;font:16px/20px "Liberation Serif",serif;color:#9198a1}
hr{margin:0;height:1px;border:0;background:#2b323a}h2{margin:0;font:700 16px/20px "Liberation Serif",serif;color:#f0f6fc}
.i{height:26px}.s{font-size:12px;line-height:15px}.l{border-bottom:1px solid #9e9cf7;color:#9492f8;display:inline-block;font-size:12px;line-height:15px;vertical-align:top}`,
`<div class="r" style="justify-content:space-between;height:36px"><h2 style="margin-top:16px">${T(0,42.500,'About')}</h2>${I(0,'gear',16,16,'margin-top:8px')}</div>
${T(-1,279.500,'No description, website, or topics provided.','font-style:italic;margin-top:14px')}
<div style="margin-top:11px">
<div class="i c">${I(0,'book')}${U(8,56,'&nbsp;Readme')}</div><div class="i c">${I(0,'pulse')}${T(11,51.500,'Activity')}</div>
<div class="i c">${I(0,'star')}${T(11.5,41,'<b>0</b> stars')}</div><div class="i c">${I(0,'eye')}${T(11.5,70.500,'<b>1</b> watching')}</div><div class="i c">${I(0,'fork')}${T(11.5,44.500,'<b>0</b> forks')}</div></div>
<hr style="margin-top:12px"><h2 style="margin-top:28px">${T(-.5,58,'Releases')}</h2>
<div class="s" style="margin-top:15px">${T(-.5,105.500,'No releases published')}</div><div style="height:16px"><div class="l">${T(-.5,99.500,'Create a new release')}</div></div>
<hr style="margin-top:15px"><h2 class="c" style="margin-top:29px">${T(-.5,63.500,'Packages')}<gh-counter style="margin-left:4px;background:#1f242b;font-weight:400">0</gh-counter></h2>
<div class="s" style="margin-top:16px">${T(-.5,111.500,'No packages published')}</div><div style="height:16px"><div class="l">${T(-.5,126,'Publish your first package')}</div></div>
<hr style="margin-top:15px">`);

define('repo-body', `:host{display:flex;align-items:flex-start;box-sizing:border-box;height:544px;padding:24px 0 0 152px}`, '<repo-files></repo-files><repo-sidebar></repo-sidebar>');

define('gh-footer', `:host{display:flex;align-items:flex-start;padding-left:384px;color:#9198a1;font:12px/16px "Liberation Serif",serif}fit-text{margin-top:17px}`,
`${I(0,'github',23.5,23.5,'margin-top:9px')}${T(7.5,99.500,'© 2024 GitHub, Inc.','margin-top:12px')}
${T(56.500,29,'Terms')}${T(16,37,'Privacy')}${T(16,40,'Security')}${T(16,29.500,'Status')}${T(15.500,25,'Docs')}${T(16.500,37,'Contact')}
${T(16,97.5,'Manage cookies','font:13.333px/16px Liberation Sans,sans-serif;margin-top:18px')}${T(15.5,222.500,'Do not share my personal information','font:13.333px/16px Liberation Sans,sans-serif;margin-top:18px')}`);

define('scroll-bar', `:host{display:flex;flex-direction:column;align-items:center;width:17px;height:781px;background:#424242}
.t{width:13px;height:718px;background:#686868;flex:none}.u,.d{width:0;border:4px solid transparent;border-top:0;border-bottom:4px solid #8a8a8a;margin:7px 0 6px}
.d{border-bottom:0;border-top:4px solid #fff;margin:35px 0 0}`, '<div class="u"></div><div class="t"></div><div class="d"></div>');

define('task-app', `:host{display:flex;flex:none;flex-direction:column;align-items:center;justify-content:flex-end;box-sizing:border-box;width:44px;height:40px}
.i{height:31px;display:flex;align-items:center;margin-bottom:-4px}u{height:3px;width:0;border-radius:2px;background:#9a9a9a;margin:4px 0 1px}:host([run]) u{width:6px}
.k{width:40px;height:40px;display:flex;flex-direction:column;align-items:center;justify-content:flex-end;border-radius:4px}
:host([on]) .k{background:#2d2d2d;box-shadow:inset 0 0 0 1px #353535}:host([on]) u{width:16px;background:#dfa0e6}`,
el => `<div class="k"><div class="i"><x-icon name="${el.getAttribute('icon')}" w="${el.getAttribute('w')}" h="${el.getAttribute('h')}"></x-icon></div><u></u></div>`);

const app = (n, w, h, f = '') => `<task-app icon="${n}" w="${w}" h="${h}" ${f}></task-app>`;
define('task-bar', `:host{display:flex;height:48px;align-items:center;background:#202020;padding-left:558.5px;box-sizing:border-box;color:#f2f2f2;font:11.500px/16px "Open Sans",sans-serif}
.t{flex:none;display:flex;flex-direction:column;margin-top:4px}`,
`${app('win',23,23)}${app('tsearch',22,23)}${app('tview',24,22)}${app('widg',24,22)}${app('chat',23,23)}${app('folder',24,22,'run')}${app('edge',24,24,'on')}${app('store',23,24)}${app('photo',22,22,'run')}${app('vlc',20,23,'run')}${app('git',24,24,'run')}
${I(328.5,'up',12,7)}<div class="t" style="margin-left:17px">${T(0,22.500,'POR')}${T(4.500,13.500,'PT')}</div>${I(18,'net',17)}${I(7,'vol',16,14)}
<div class="t" style="margin-left:15.500px;width:60px;align-items:flex-end;margin-top:2px">${T(0,27,'19:35')}${T(0,60,'29/12/2024')}</div>${I(10,'moon',13,15)}`);
</script>
</body>
</html>
